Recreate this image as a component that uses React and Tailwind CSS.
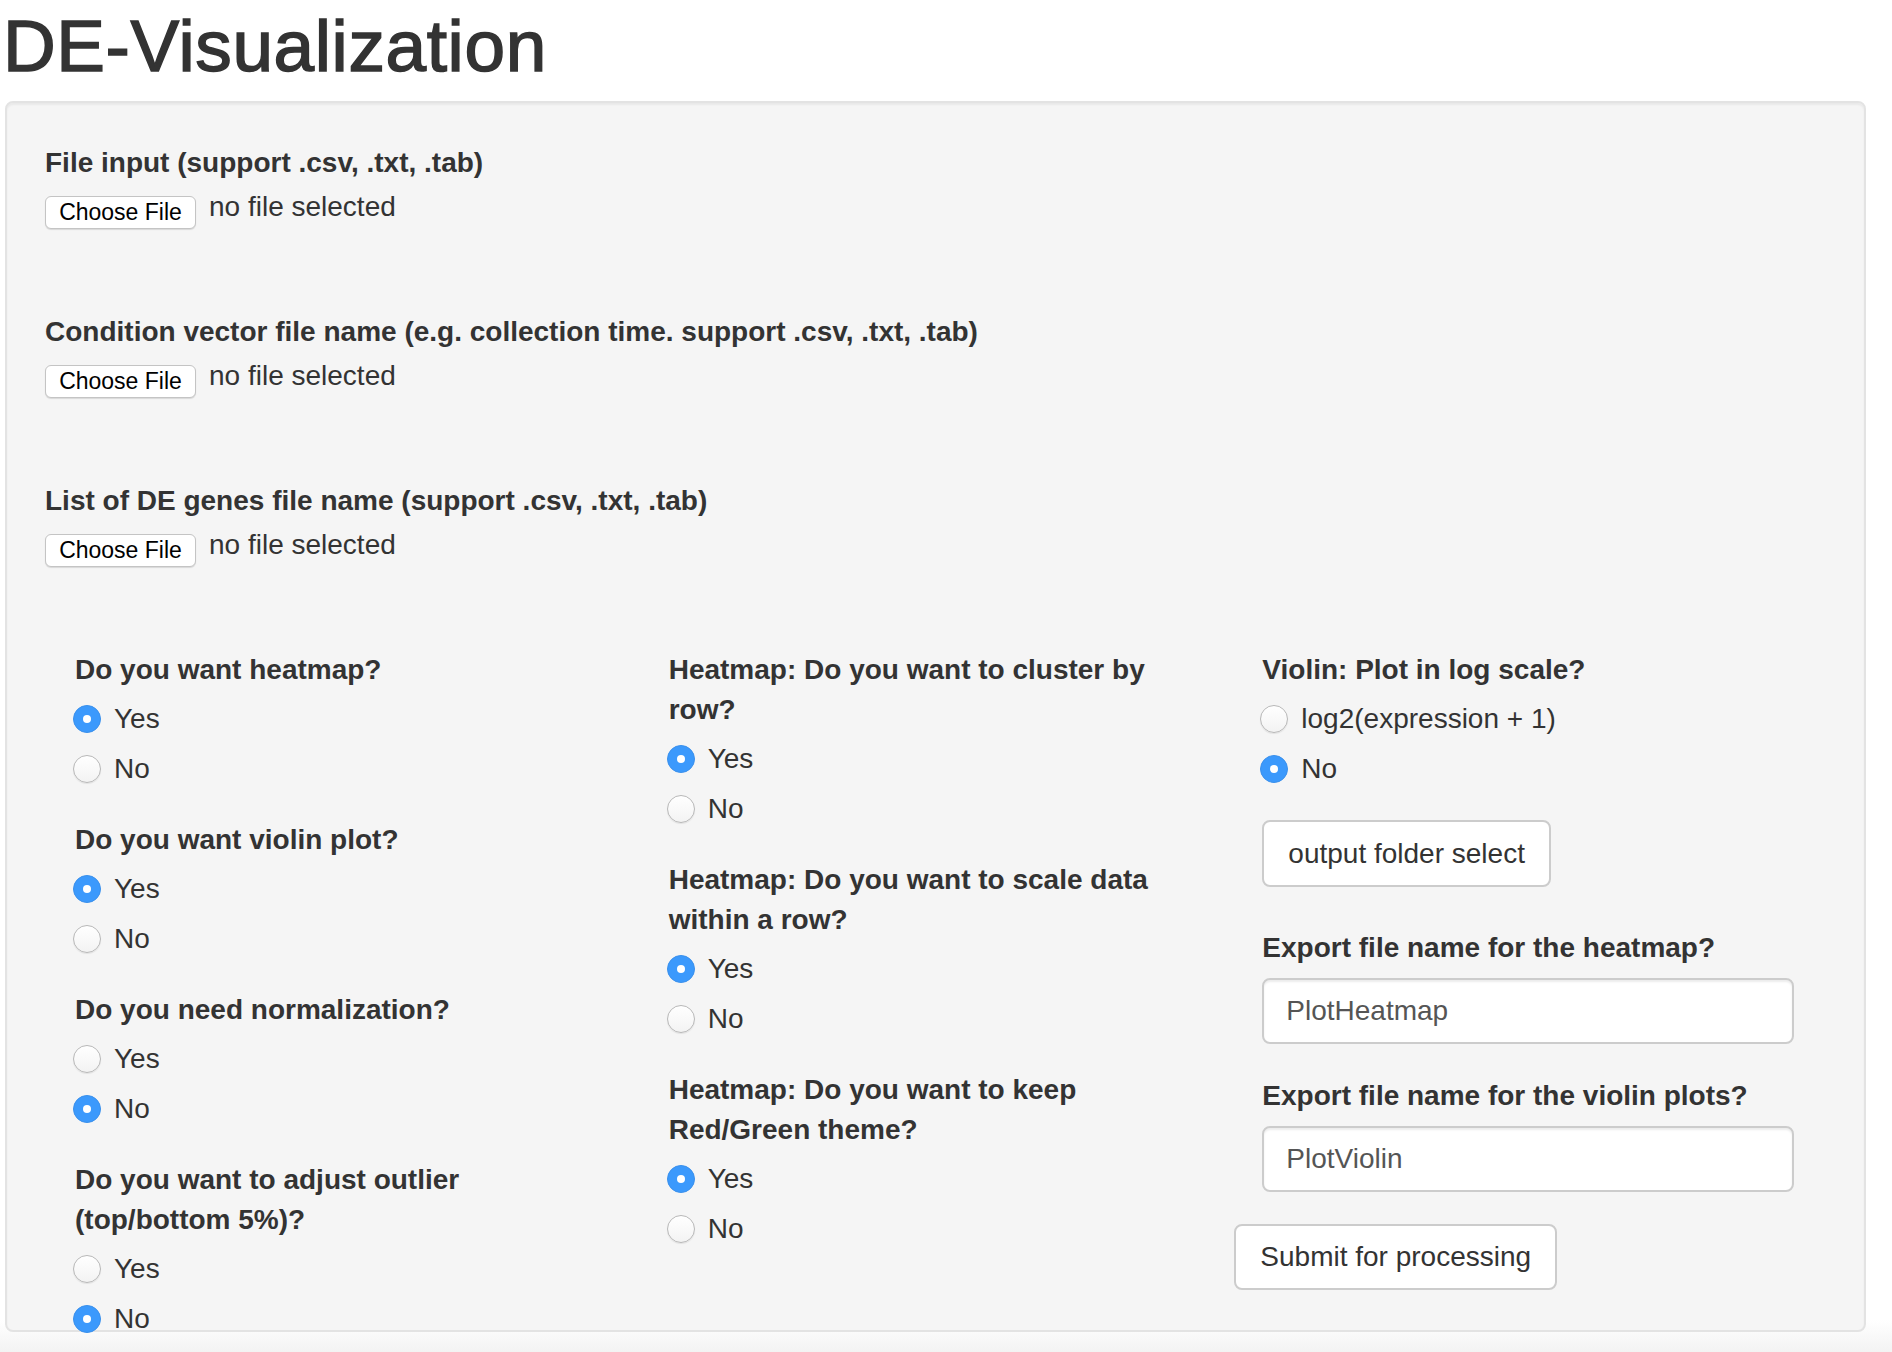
import React from "react";

const font = "[font-family:'Liberation_Sans',Arial,Helvetica,sans-serif]";

function Radio({ label, checked }) {
  return (
    <div className="flex items-center h-[50px]">
      {checked ? (
        <span className="ml-[-2px] w-[28px] h-[28px] rounded-full bg-[#3b99fc] border border-[#3a90ec] flex items-center justify-center shrink-0">
          <span className="w-[8px] h-[8px] rounded-full bg-white" />
        </span>
      ) : (
        <span className="ml-[-2px] w-[28px] h-[28px] rounded-full border border-[#b8b8b8] bg-gradient-to-b from-white to-[#f3f3f3] shadow-[0_1px_1px_rgba(0,0,0,0.08)] shrink-0" />
      )}
      <span className="ml-[13px] text-[28px] leading-[50px] text-[#333]">{label}</span>
    </div>
  );
}

function RadioGroup({ title, options, selected }) {
  return (
    <div className="mb-[26px]">
      <div className="text-[28px] leading-[40px] font-bold text-[#333]">{title}</div>
      <div className="mt-[4px]">
        {options.map((o) => (
          <Radio key={o} label={o} checked={o === selected} />
        ))}
      </div>
    </div>
  );
}

function FileInput({ label }) {
  return (
    <div className="mb-[83px]">
      <div className="text-[28px] leading-[40px] font-bold text-[#333]">{label}</div>
      <div className="mt-[13px] flex items-start h-[33px]">
        <button className="w-[151px] h-[33px] bg-white border border-[#c4c4c4] rounded-[6px] shadow-[0_1px_1px_rgba(0,0,0,0.12)] text-[23px] leading-[31px] text-black">
          Choose File
        </button>
        <span className="ml-[13px] mt-[-3px] text-[28px] leading-[28px] text-[#333]">no file selected</span>
      </div>
    </div>
  );
}

export default function App() {
  return (
    <div className={`${font} min-h-screen bg-[linear-gradient(to_bottom,#ffffff_0,#ffffff_1320px,#f3f3f3_1352px)] text-[#333]`}>
      {/* Title */}
      <h1 className="pl-[3px] pt-[6px] pb-[16px] text-[73px] leading-[79px] font-normal tracking-[0.6px] text-[#333] [-webkit-text-stroke:1.5px_#333]">
        DE-Visualization
      </h1>

      {/* Well */}
      <div className="ml-[5px] w-[1861px] h-[1231px] bg-[#f5f5f5] border-2 border-[#e3e3e3] rounded-[8px] shadow-[inset_0_2px_2px_rgba(0,0,0,0.05)] px-[38px] pt-[40px]">
        <FileInput label="File input (support .csv, .txt, .tab)" />
        <FileInput label="Condition vector file name (e.g. collection time. support .csv, .txt, .tab)" />
        <FileInput label="List of DE genes file name (support .csv, .txt, .tab)" />

        <div className="mt-[2px] grid grid-cols-3 w-[1781px]">
          {/* Column 1 */}
          <div className="px-[30px]">
            <RadioGroup title="Do you want heatmap?" options={["Yes", "No"]} selected="Yes" />
            <RadioGroup title="Do you want violin plot?" options={["Yes", "No"]} selected="Yes" />
            <RadioGroup title="Do you need normalization?" options={["Yes", "No"]} selected="No" />
            <RadioGroup title="Do you want to adjust outlier (top/bottom 5%)?" options={["Yes", "No"]} selected="No" />
          </div>

          {/* Column 2 */}
          <div className="px-[30px]">
            <RadioGroup title="Heatmap: Do you want to cluster by row?" options={["Yes", "No"]} selected="Yes" />
            <RadioGroup title="Heatmap: Do you want to scale data within a row?" options={["Yes", "No"]} selected="Yes" />
            <RadioGroup title="Heatmap: Do you want to keep Red/Green theme?" options={["Yes", "No"]} selected="Yes" />
          </div>

          {/* Column 3 */}
          <div>
            <div className="px-[30px]">
              <RadioGroup title="Violin: Plot in log scale?" options={["log2(expression + 1)", "No"]} selected="No" />
              <button className="h-[67px] px-[24px] bg-white border-2 border-[#ccc] rounded-[8px] text-[28px] leading-[40px] text-[#333]">
                output folder select
              </button>
              <div className="mt-[41px] text-[28px] leading-[40px] font-bold text-[#333]">Export file name for the heatmap?</div>
              <div className="mt-[10px] w-[532px] h-[66px] bg-white border-2 border-[#ccc] rounded-[8px] shadow-[inset_0_2px_2px_rgba(0,0,0,0.075)] px-[22px] flex items-center text-[28px] leading-[40px] text-[#555]">
                PlotHeatmap
              </div>
              <div className="mt-[32px] text-[28px] leading-[40px] font-bold text-[#333]">Export file name for the violin plots?</div>
              <div className="mt-[10px] w-[532px] h-[66px] bg-white border-2 border-[#ccc] rounded-[8px] shadow-[inset_0_2px_2px_rgba(0,0,0,0.075)] px-[22px] flex items-center text-[28px] leading-[40px] text-[#555]">
                PlotViolin
              </div>
            </div>
            <button className="ml-[2px] mt-[32px] h-[66px] px-[24px] bg-white border-2 border-[#ccc] rounded-[8px] text-[28px] leading-[40px] text-[#333]">
              Submit for processing
            </button>
          </div>
        </div>
      </div>
    </div>
  );
}
